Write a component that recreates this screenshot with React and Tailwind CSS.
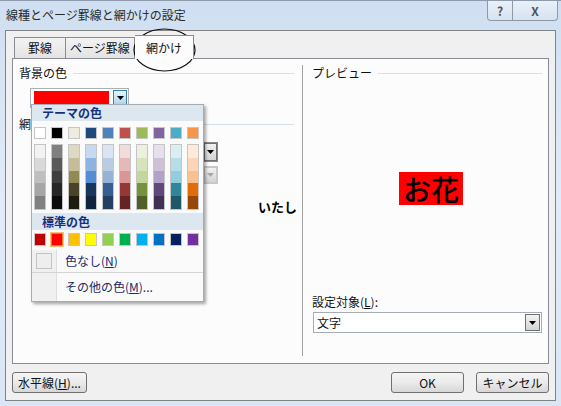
import React from 'react';

const FONT = { fontFamily: '"Noto Sans CJK JP", "Noto Sans", sans-serif' };

const themeTop = ['#ffffff', '#000000', '#eeece1', '#1f497d', '#4f81bd', '#c0504d', '#9bbb59', '#8064a2', '#4bacc6', '#f79646'];
const themeShades = [
  ['#f2f2f2', '#d9d9d9', '#bfbfbf', '#a6a6a6', '#808080'],
  ['#7f7f7f', '#595959', '#3f3f3f', '#262626', '#0c0c0c'],
  ['#ddd9c3', '#c4bd97', '#938953', '#494429', '#1d1b10'],
  ['#c6d9f0', '#8db3e2', '#548dd4', '#17365d', '#0f243e'],
  ['#dbe5f1', '#b8cce4', '#95b3d7', '#366092', '#244061'],
  ['#f2dcdb', '#e5b9b7', '#d99694', '#953734', '#632423'],
  ['#ebf1dd', '#d7e3bc', '#c3d69b', '#76923c', '#4f6128'],
  ['#e5e0ec', '#ccc1d9', '#b2a2c7', '#5f497a', '#3f3151'],
  ['#dbeef3', '#b7dde8', '#92cddc', '#31859b', '#205867'],
  ['#fdeada', '#fbd5b5', '#fac08f', '#e36c09', '#974806'],
];
const standard = ['#c00000', '#ff0000', '#ffc000', '#ffff00', '#92d050', '#00b050', '#00b0f0', '#0070c0', '#002060', '#7030a0'];

const Arrow = ({ color = '#000' }) => (
  <svg width="7" height="4" viewBox="0 0 7 4">
    <path d="M0 0h7L3.5 4z" fill={color} />
  </svg>
);

const DropButton = ({ className = '', color }) => (
  <div className={`flex items-center justify-center border border-[#707070] bg-gradient-to-b from-[#f2f2f2] to-[#d4d4d4] ${className}`}>
    <Arrow color={color} />
  </div>
);

const Button = ({ children, className = '' }) => (
  <div className={`h-[21px] flex items-center justify-center rounded-[3px] border border-[#707070] bg-gradient-to-b from-[#f4f4f4] via-[#ebebeb] to-[#d7d7d7] text-[12px] text-[#111] ${className}`}>
    {children}
  </div>
);

const ColorPopup = () => (
  <div className="absolute left-[31px] top-[103px] w-[173px] h-[198px] bg-[#fafafa] border border-[#a7abb0] shadow-[2px_2px_3px_rgba(0,0,0,0.35)] flex flex-col">
    {/* テーマの色 */}
    <div className="h-[16px] bg-[#dde7ef] pl-[10px] flex items-center text-[12px] font-bold text-[#15317e]">テーマの色</div>
    <div className="mt-[6px] ml-[2px] flex gap-[5px]">
      {themeTop.map((c) => (
        <div key={c} className="w-[12px] h-[12px] border border-[#c5c5c5]" style={{ backgroundColor: c }} />
      ))}
    </div>
    <div className="mt-[5px] ml-[2px] flex gap-[5px]">
      {themeShades.map((col, i) => (
        <div key={i} className="w-[12px] h-[66px] border border-[#c5c5c5] flex flex-col">
          {col.map((c) => (
            <div key={c} className="flex-1" style={{ backgroundColor: c }} />
          ))}
        </div>
      ))}
    </div>
    {/* 標準の色 */}
    <div className="mt-[3px] h-[17px] bg-[#dde7ef] pl-[10px] flex items-center text-[12px] font-bold text-[#15317e]">標準の色</div>
    <div className="mt-[3px] ml-[2px] flex gap-[5px]">
      {standard.map((c, i) => (
        <div
          key={c}
          className={`w-[12px] h-[13px] border ${i === 1 ? 'border-[#e8801a] outline outline-1 outline-[#f6c27a]' : 'border-[#c5c5c5]'}`}
          style={{ backgroundColor: c }}
        />
      ))}
    </div>
    <div className="mt-[4px] flex-1 flex flex-col">
      <div className="h-[23px] flex border-b border-[#d4d4d4]">
        <div className="w-[25px] border-r border-[#dedede] bg-[#f0f0f0] flex items-center justify-center">
          <div className="w-[16px] h-[16px] border border-[#c3c3c3] bg-[#eeeeee]" />
        </div>
        <div className="pl-[8px] flex items-center text-[12px] text-[#1a2a6c]">
          色なし(<span className="underline">N</span>)
        </div>
      </div>
      <div className="flex-1 flex">
        <div className="w-[25px] border-r border-[#dedede] bg-[#f0f0f0]" />
        <div className="pl-[8px] flex items-center text-[12px] text-[#1a2a6c]">
          その他の色(<span className="underline">M</span>)...
        </div>
      </div>
    </div>
  </div>
);

export default function App() {
  return (
    <div style={FONT} className="relative w-[561px] h-[406px] overflow-hidden bg-gradient-to-b from-[#cfdff1] via-[#e2ecf8] to-[#d8e6f5] border-t border-[#8c9aab] flex flex-col">
      {/* Title bar */}
      <div className="h-[29px] flex items-start">
        <div className="pl-[6px] pt-[5px] text-[12px] text-[#2a2a2a]">線種とページ罫線と網かけの設定</div>
        <div className="ml-auto mr-[3px] flex h-[20px]">
          <div className="w-[26px] flex items-center justify-center border border-t-0 border-[#8e9aa8] rounded-bl-[4px] bg-gradient-to-b from-[#e9f0f8] to-[#d7e3f1] text-[12px] font-bold text-[#4a5260]">?</div>
          <div className="w-[45px] flex items-center justify-center border border-t-0 border-l-0 border-[#8e9aa8] rounded-br-[4px] bg-gradient-to-b from-[#e9f0f8] to-[#d7e3f1] text-[12px] font-bold text-[#4a5260]">X</div>
        </div>
      </div>

      {/* Dialog body */}
      <div className="mx-[5px] h-[371px] border border-[#838383] bg-[#f0f0f0] flex flex-col">
        {/* Tabs */}
        <div className="h-[27px] flex items-end pl-[8px]">
          <div className="w-[52px] h-[21px] border border-b-0 border-[#898c95] bg-gradient-to-b from-[#f3f3f3] to-[#e3e3e3] flex items-center justify-center text-[12px] text-[#111]">罫線</div>
          <div className="w-[69px] h-[21px] border border-b-0 border-l-0 border-[#898c95] bg-gradient-to-b from-[#f3f3f3] to-[#e3e3e3] flex items-center justify-center text-[12px] text-[#111]">ページ罫線</div>
          <div className="w-[59px] h-[24px] -mb-px relative z-10 border border-b-0 border-l-0 border-[#898c95] bg-[#fcfcfc] flex items-center justify-center text-[12px] text-[#111]">網かけ</div>
        </div>

        {/* Tab panel */}
        <div className="ml-[6px] mr-[6px] h-[306px] border border-[#898c95] bg-[#fcfcfc] flex">
          {/* Left column */}
          <div className="w-[289px] flex flex-col">
            <div className="mt-[6px] pl-[6px] flex items-center gap-[6px] h-[16px]">
              <span className="text-[12px] text-[#111]">背景の色</span>
              <div className="flex-1 h-px bg-[#d5dfe5] mr-[8px]" />
            </div>
            <div className="mt-[7px] ml-[17px] w-[99px] h-[20px] border border-[#a9b0b8] bg-white flex items-center">
              <div className="ml-[3px] w-[75px] h-[14px] bg-[#ff0000]" />
              <div className="ml-auto mr-[1px] w-[14px] h-[17px] border border-[#3c7fb1] bg-gradient-to-b from-[#e5f4fc] to-[#a7d3ef] flex items-center justify-center">
                <Arrow />
              </div>
            </div>
            <div className="mt-[8px] pl-[6px] flex items-center gap-[6px] h-[16px]">
              <span className="text-[12px] text-[#111]">網</span>
              <div className="flex-1 h-px bg-[#d5dfe5] mr-[8px]" />
            </div>
            <div className="mt-[10px] ml-[100px] w-[105px] h-[20px] border border-[#8a8a8a] bg-white flex justify-end">
              <DropButton className="w-[13px]" />
            </div>
            <div className="mt-[4px] ml-[100px] w-[105px] h-[18px] border border-[#c8c8c8] bg-white flex justify-end">
              <DropButton className="w-[13px] border-[#c8c8c8]" color="#a8a8a8" />
            </div>
          </div>

          <div className="w-px bg-[#a0a0a0] mt-[6px] mb-[7px]" />

          {/* Right column: preview */}
          <div className="flex-1 flex flex-col">
            <div className="mt-[6px] pl-[9px] flex items-center gap-[6px] h-[16px]">
              <span className="text-[12px] text-[#111]">プレビュー</span>
              <div className="flex-1 h-px bg-[#d5dfe5] mr-[6px]" />
            </div>
            <div className="mt-[91px] ml-[96px] w-[64px] h-[33px] bg-[#ff0000] flex items-center justify-center text-[28px] font-medium leading-none text-black">お花</div>
            <div className="mt-[89px] pl-[9px] text-[12px] leading-[16px] text-[#111]">
              設定対象(<span className="underline">L</span>):
            </div>
            <div className="mt-[2px] ml-[10px] w-[229px] h-[21px] border border-[#a5acb5] bg-white flex items-center">
              <span className="pl-[3px] text-[12px] text-[#111]">文字</span>
              <DropButton className="ml-auto mr-[1px] w-[15px] h-[17px]" />
            </div>
          </div>
        </div>

        {/* Buttons */}
        <div className="mt-[8px] mx-[6px] flex items-center">
          <Button className="w-[75px]">
            水平線(<span className="underline">H</span>)...
          </Button>
          <Button className="ml-auto w-[73px]">OK</Button>
          <Button className="ml-[12px] w-[73px]">キャンセル</Button>
        </div>
      </div>

      {/* Overlays */}
      <div className="absolute left-[258px] top-[199px] text-[13px] font-semibold leading-[14px] text-black bg-white">いたし</div>
      <ColorPopup />
      <svg className="absolute left-[133px] top-[27px]" width="64" height="45" viewBox="0 0 64 45">
        <ellipse cx="31.5" cy="22" rx="30.5" ry="21" fill="none" stroke="#111" strokeWidth="1.2" />
      </svg>
    </div>
  );
}
